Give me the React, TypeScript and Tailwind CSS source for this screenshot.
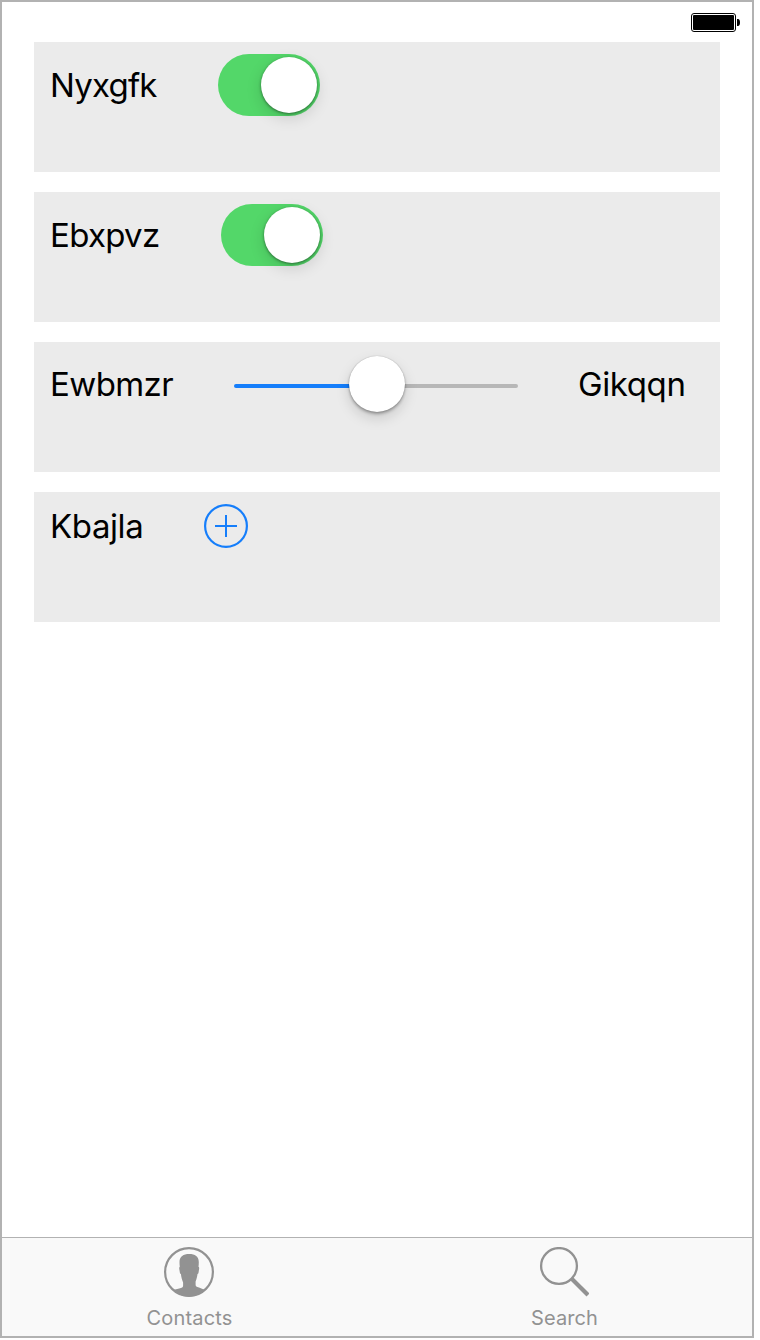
import type { ReactNode } from "react";

function StatusBar() {
  return (
    <div className="flex h-10 shrink-0 justify-end pt-[11px] pr-3">
      <svg width="49" height="19" viewBox="0 0 49 19" fill="none">
        <rect x="0.5" y="0.5" width="44" height="18" rx="2.5" stroke="#000" />
        <rect x="2" y="2" width="41" height="15" rx="1" fill="#000" />
        <path d="M46 6h1c1.300 0 2 1.500 2 3.500s-.7 3.500-2 3.500h-1z" fill="#000" />
      </svg>
    </div>
  );
}

function Card({ children }: { children: ReactNode }) {
  return <div className="flex h-[130px] items-start bg-[#ebebeb] pl-4">{children}</div>;
}

function Toggle() {
  return (
    <div className="mt-3 flex h-[62px] w-[102px] justify-end rounded-full bg-[#53d769] p-[3px]">
      <div className="size-14 rounded-full bg-white shadow-[0_1px_3px_rgba(0,0,0,0.45),0_5px_16px_rgba(0,0,0,0.14)]" />
    </div>
  );
}

function Slider() {
  return (
    <div className="mt-[14px] flex h-14 w-[284px] items-center">
      <div className="mt-1 h-1 w-[116px] rounded-l-full bg-[#157efb]" />
      <div className="relative -ml-px size-14 rounded-full bg-white shadow-[0_0_1px_rgba(0,0,0,0.3),0_2px_3px_rgba(0,0,0,0.3),0_6px_14px_rgba(0,0,0,0.15)]" />
      <div className="mt-1 -ml-px h-1 flex-1 rounded-r-full bg-[#b7b7b7]" />
    </div>
  );
}

export default function App() {
  return (
    <div className="h-[1340px] w-[760px] bg-white font-['Inter','Liberation_Sans',sans-serif] text-black">
      <div className="flex h-[1338px] w-[754px] flex-col border-2 border-[#b2b2b2] bg-white">
        <StatusBar />
        <main className="flex flex-1 flex-col gap-5 px-8">
          <Card>
            <span className="mt-[23px] w-[168px] text-[33px] leading-10 tracking-[-0.8px]">Nyxgfk</span>
            <Toggle />
          </Card>
          <Card>
            <span className="mt-[23px] w-[171px] text-[33px] leading-10 tracking-[-0.7px]">Ebxpvz</span>
            <Toggle />
          </Card>
          <Card>
            <span className="mt-[22px] w-[184px] text-[33px] leading-10 tracking-[-0.6px]">Ewbmzr</span>
            <Slider />
            <span className="mt-[22px] ml-[60px] text-[33px] leading-10 tracking-[-0.4px]">Gikqqn</span>
          </Card>
          <Card>
            <span className="mt-[14px] w-[154px] text-[33px] leading-10 tracking-[-0.4px]">Kbajla</span>
            <svg className="mt-3" width="44" height="44" viewBox="0 0 44 44" fill="none" stroke="#157efb" strokeWidth="2">
              <circle cx="22" cy="22" r="20.900" strokeWidth="2.200" />
              <path d="M11 22h22M22 11v22" />
            </svg>
          </Card>
        </main>
        <nav className="grid h-[99px] shrink-0 grid-cols-2 border-t border-[#b2b2b2] bg-[#f9f9f9] text-[#929292]">
          <div className="flex flex-col items-center pt-[9px]">
            <svg className="mr-px" width="50" height="50" viewBox="0 0 50 50" fill="none">
              <circle cx="25" cy="25" r="23.900" stroke="#929292" strokeWidth="2.200" />
              <path
                d="M25.200 7c5.800 0 9.600 2.500 9.600 8 0 1.800-.1 3-.3 4.700.8.500.8 1.500.5 3l-.5 3c-.2.800-.5 1.200-1 1.300-.3 2.700-.9 5-1.900 7.500v3c0 1.800.9 2.500 3.400 3L41 43C37 47 31.500 49.500 25 49.500S13 47 9 43l6.200-1.500c2.700-.5 3.900-1.200 3.900-3v-3c-1-2.500-1.900-5.300-2.200-8.500-.5-.1-.8-.5-1-1.300l-.5-3c-.3-1.500-.3-2.500.4-3-.2-1.700-.3-2.900-.3-4.700 0-5.500 3.900-8 9.700-8Z"
                fill="#929292"
              />
            </svg>
            <span className="mt-[9px] text-[20px] leading-6 tracking-[0.2px]">Contacts</span>
          </div>
          <div className="flex flex-col items-center pt-[9px]">
            <svg className="mr-px" width="50" height="50" viewBox="0 0 50 50" fill="none" stroke="#929292">
              <circle cx="20" cy="19" r="17.900" strokeWidth="2.300" />
              <path d="M32.700 31.700 49 48" strokeWidth="4.200" />
            </svg>
            <span className="mt-[9px] text-[20px] leading-6 tracking-[0.1px]">Search</span>
          </div>
        </nav>
      </div>
    </div>
  );
}
